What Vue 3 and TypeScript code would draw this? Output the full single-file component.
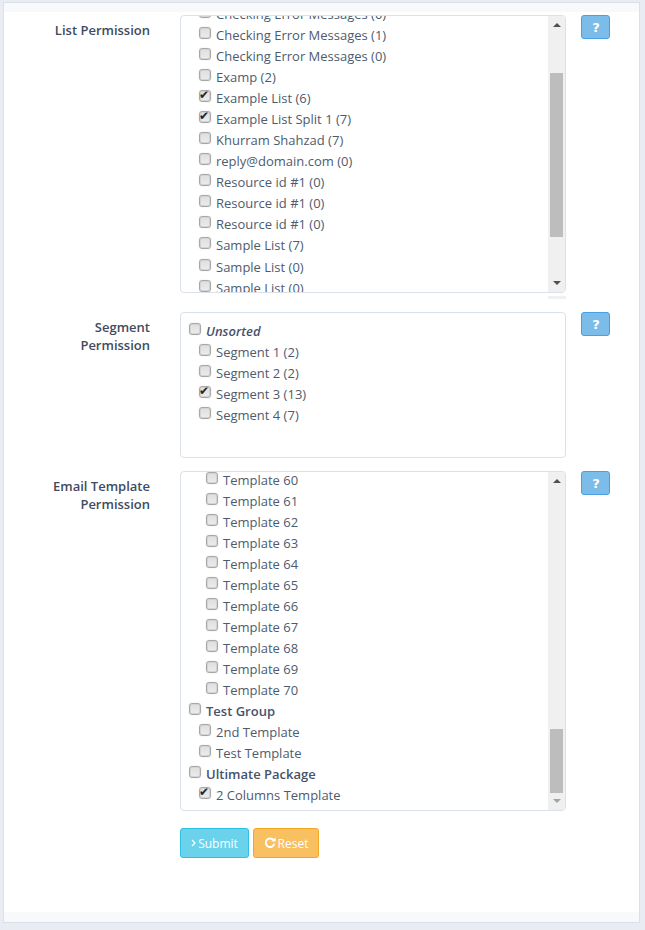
<script setup lang="ts">
type Item = { label: string; depth: number; checked?: boolean; kind?: 'group' | 'unsorted' }

const listItems: Item[] = [
  { label: 'Checking Error Messages (0)', depth: 1 },
  { label: 'Checking Error Messages (1)', depth: 1 },
  { label: 'Checking Error Messages (0)', depth: 1 },
  { label: 'Examp (2)', depth: 1 },
  { label: 'Example List (6)', depth: 1, checked: true },
  { label: 'Example List Split 1 (7)', depth: 1, checked: true },
  { label: 'Khurram Shahzad (7)', depth: 1 },
  { label: 'reply@domain.com (0)', depth: 1 },
  { label: 'Resource id #1 (0)', depth: 1 },
  { label: 'Resource id #1 (0)', depth: 1 },
  { label: 'Resource id #1 (0)', depth: 1 },
  { label: 'Sample List (7)', depth: 1 },
  { label: 'Sample List (0)', depth: 1 },
  { label: 'Sample List (0)', depth: 1 }
]

const segmentItems: Item[] = [
  { label: 'Unsorted', depth: 0, kind: 'unsorted' },
  { label: 'Segment 1 (2)', depth: 1 },
  { label: 'Segment 2 (2)', depth: 1 },
  { label: 'Segment 3 (13)', depth: 1, checked: true },
  { label: 'Segment 4 (7)', depth: 1 }
]

const templateItems: Item[] = [
  ...Array.from({ length: 11 }, (_, i): Item => ({ label: `Template ${60 + i}`, depth: 2 })),
  { label: 'Test Group', depth: 0, kind: 'group' },
  { label: '2nd Template', depth: 1 },
  { label: 'Test Template', depth: 1 },
  { label: 'Ultimate Package', depth: 0, kind: 'group' },
  { label: '2 Columns Template', depth: 1, checked: true }
]

const sections = [
  { title: ['List Permission'], items: listItems, cls: 'box-list', thumbTop: 57, thumbHeight: 164, scroll: true },
  { title: ['Segment', 'Permission'], items: segmentItems, cls: 'box-segment', thumbTop: 0, thumbHeight: 0, scroll: false },
  { title: ['Email Template', 'Permission'], items: templateItems, cls: 'box-template', thumbTop: 257, thumbHeight: 64, scroll: true }
]
</script>

<template>
  <div class="page">
    <div class="card">
      <div class="strip"></div>
      <form class="body" @submit.prevent>
        <div v-for="section in sections" :key="section.cls" class="form-row" :class="section.cls">
          <div class="row-label">
            <div v-for="line in section.title" :key="line">{{ line }}</div>
          </div>
          <div class="box">
            <div class="box-inner">
              <label
                v-for="(item, i) in section.items"
                :key="i"
                class="item"
                :class="[`depth-${item.depth}`, item.kind]"
              >
                <input type="checkbox" :checked="item.checked" />
                <span>{{ item.label }}</span>
              </label>
            </div>
            <div v-if="section.scroll" class="scrollbar">
              <span class="arrow up"></span>
              <span class="thumb" :style="{ top: section.thumbTop + 'px', height: section.thumbHeight + 'px' }"></span>
              <span class="arrow down"></span>
            </div>
          </div>
          <button type="button" class="help">?</button>
        </div>
        <div class="actions">
          <button type="submit" class="btn submit">
            <svg class="chev" width="5" height="8" viewBox="0 0 5 8" aria-hidden="true">
              <path d="M1 1L4 4L1 7" fill="none" stroke="#fff" stroke-width="1.2" />
            </svg>
            Submit
          </button>
          <button type="reset" class="btn reset">
            <svg width="12" height="12" viewBox="0 0 12 12" aria-hidden="true">
              <path d="M9.6 3.2A4.3 4.3 0 1 0 10.3 6.6" fill="none" stroke="#fff" stroke-width="2" />
              <path d="M7.2 4.6L11.6 4.6L11.6 0.4Z" fill="#fff" />
            </svg>
            Reset
          </button>
        </div>
      </form>
      <div class="strip bottom"></div>
    </div>
  </div>
</template>

<style>
html,
body {
  margin: 0;
  background: #e9edf3;
}
</style>

<style scoped>
.page {
  padding: 2px 5px 7px 3px;
  font-family: "Open Sans", "Liberation Sans", sans-serif;
  font-size: 13px;
  color: #4e5b6e;
}

.card {
  background: #fff;
  border: 1px solid #d9e0e8;
  height: 921px;
  display: flex;
  flex-direction: column;
  box-sizing: border-box;
}

.strip {
  height: 9px;
  background: #f7f9fb;
}

.strip.bottom {
  height: 10px;
}

.body {
  flex: 1;
  padding-top: 3px;
}

.form-row {
  display: flex;
  align-items: flex-start;
  margin-bottom: 13px;
}

.row-label {
  width: 146px;
  text-align: right;
  font-weight: 600;
  line-height: 18px;
  color: #3f4b60;
  padding-top: 6px;
  flex: none;
}

.box {
  margin-left: 30px;
  width: 386px;
  flex: none;
  box-sizing: border-box;
  border: 1px solid #dbe1e8;
  border-radius: 4px;
  position: relative;
  overflow: hidden;
  background: #fff;
}

.box-list {
  margin-bottom: 19px;
}

.box-list .box {
  height: 278px;
  overflow: visible;
}

.box-list .box-inner {
  height: 276px;
  overflow: hidden;
}

.box-list .item {
  height: 21.08px;
}

.box-list .item:first-child {
  margin-top: -12.96px;
}

.box-segment .box {
  height: 146px;
}

.box-segment .box-inner {
  padding-top: 7px;
}

.box-template .box {
  height: 340px;
}

.box-template .item:first-child {
  margin-top: -3px;
}

.item {
  display: flex;
  align-items: center;
  height: 21px;
  white-space: nowrap;
}

.item input {
  appearance: none;
  position: relative;
  flex: none;
  box-sizing: border-box;
  width: 12px;
  height: 12px;
  margin: -4px 5px 0 0;
  border: 1px solid #a8a8a8;
  border-radius: 3px;
  background: linear-gradient(#dedede, #ececec);
  box-shadow: inset 0 0 0 1px #d4d4d4, 0 0 1px #bdbdbd;
}

.item input:checked::after {
  content: "\2714";
  position: absolute;
  left: -1px;
  top: -3px;
  font-family: "DejaVu Sans", sans-serif;
  font-size: 12px;
  line-height: 14px;
  color: #262626;
}

.depth-0 {
  padding-left: 8px;
}

.depth-1 {
  padding-left: 18px;
}

.depth-2 {
  padding-left: 25px;
}

.group {
  font-weight: 600;
  color: #47536a;
}

.unsorted {
  font-weight: 600;
  font-style: italic;
  color: #47536a;
}

.scrollbar {
  position: absolute;
  top: 0;
  right: 0;
  bottom: 0;
  width: 17px;
  background: #f0f0f0;
}

.box-list .scrollbar::after {
  content: "";
  position: absolute;
  left: 0;
  right: -1px;
  bottom: -7px;
  height: 3px;
  background: #f0f0f0;
}

.thumb {
  position: absolute;
  left: 2px;
  width: 13px;
  background: #bdbdbd;
}

.arrow {
  position: absolute;
  left: 5px;
  width: 0;
  height: 0;
  border-left: 4px solid transparent;
  border-right: 4px solid transparent;
}

.arrow.up {
  top: 7px;
  border-bottom: 4px solid #505050;
}

.arrow.down {
  bottom: 7px;
  border-top: 4px solid #505050;
}

.box-template .arrow.down {
  border-top-color: #a3a3a3;
}

.help {
  margin-left: 15px;
  width: 29px;
  height: 24px;
  flex: none;
  padding: 0 0 0 1px;
  border: 1px solid #4a9fe0;
  border-radius: 3px;
  background: #7cbce9;
  color: #fff;
  font-family: "DejaVu Sans", sans-serif;
  font-weight: 700;
  font-size: 13px;
}

.actions {
  display: flex;
  gap: 4px;
  margin-left: 176px;
  margin-top: 17px;
}

.btn {
  height: 30px;
  box-sizing: border-box;
  padding: 0;
  border-radius: 3px;
  color: #fff;
  font-family: inherit;
  font-size: 12px;
  display: flex;
  align-items: center;
  justify-content: center;
}

.submit {
  width: 69px;
  gap: 2px;
  background: #6bd2ec;
  border: 1px solid #2fbfe3;
}

.reset {
  width: 66px;
  gap: 2px;
  background: #f9c062;
  border: 1px solid #f5a623;
}
</style>
